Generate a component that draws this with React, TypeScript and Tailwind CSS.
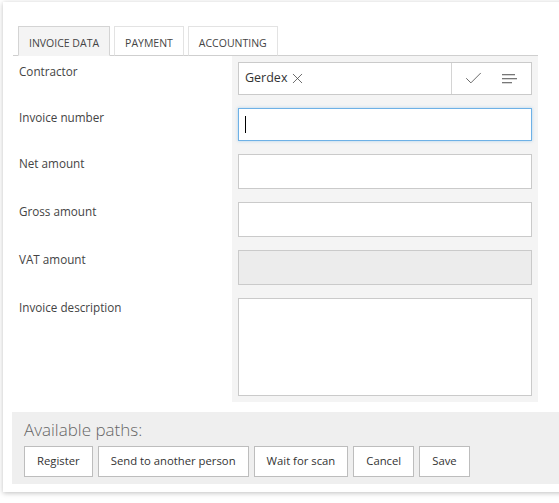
import { Check, X } from 'lucide-react'

const tabs = ['INVOICE DATA', 'PAYMENT', 'ACCOUNTING']
const paths = ['Register', 'Send to another person', 'Wait for scan', 'Cancel', 'Save']

const labels = [
  { name: 'Contractor', h: 'h-[46px]' },
  { name: 'Invoice number', h: 'h-[46px]' },
  { name: 'Net amount', h: 'h-[48px]' },
  { name: 'Gross amount', h: 'h-[48px]' },
  { name: 'VAT amount', h: 'h-[48px]' },
  { name: 'Invoice description', h: 'h-[98px]' },
]

export default function App() {
  return (
    <div className="relative h-[503px] w-[559px] overflow-hidden bg-white font-['Open_Sans',sans-serif] text-[#444]">
      <div className="ml-[3px] mt-[2px] w-[570px] bg-white pb-[8px] pt-[24px] shadow-[0_1px_5px_rgba(0,0,0,0.25)]">
        <div className="ml-[10px] flex w-[525px] gap-[4px] border-b border-[#cfcfcf] pl-[5px]">
          {tabs.map((t, i) => (
            <div
              key={t}
              className={`-mb-px flex h-[30px] items-center border px-[10px] pt-[5px] text-[10.5px] ${
                i === 0 ? 'border-[#d4d4d4] border-b-[#f4f4f4] bg-[#f4f4f4]' : 'border-[#e3e3e3] border-b-[#cfcfcf] bg-white'
              }`}
            >
              {t}
            </div>
          ))}
        </div>

        <div className="flex">
          <div className="w-[229px] pl-[16px] pt-[6px] text-[11.7px]">
            {labels.map((l) => (
              <div key={l.name} className={`${l.h} leading-[18px]`}>
                {l.name}
              </div>
            ))}
          </div>
          <div className="w-[306px] bg-[#f4f4f4] p-[6px]">
            <div className="mb-[13px] flex h-[33px] border border-[#cacaca] bg-white">
              <div className="flex flex-1 items-center gap-[2px] pl-[6px] text-[12.5px] text-[#333]">
                Gerdex
                <X size={17} strokeWidth={1.1} className="text-[#444]" />
              </div>
              <div className="flex w-[80px] items-center border-l border-[#d4d4d4] pl-[11px]">
                <Check size={21} strokeWidth={1} className="text-[#555]" />
                <svg className="ml-[18px]" width="15" height="10" viewBox="0 0 15 10">
                  <rect x="0" y="0" width="13" height="1.3" fill="#777" />
                  <rect x="0" y="4" width="15" height="1.3" fill="#777" />
                  <rect x="0" y="8" width="10" height="1.3" fill="#777" />
                </svg>
              </div>
            </div>
            <div className="mb-[13px] flex h-[33px] items-center border border-[#6eb1e6] bg-white pl-[6px] shadow-[0_0_3px_rgba(110,177,230,0.5)]">
              <div className="h-[17px] w-px bg-black" />
            </div>
            <div className="mb-[13px] h-[35px] border border-[#cacaca] bg-white" />
            <div className="mb-[13px] h-[35px] border border-[#cacaca] bg-white" />
            <div className="mb-[13px] h-[35px] border border-[#cacaca] bg-[#ececec]" />
            <div className="h-[98px] border border-[#cacaca] bg-white" />
          </div>
        </div>

        <div className="ml-[9px] mt-[10px] bg-[#efefef] pb-[7px] pl-[12px] pr-[10px] pt-[6px]">
          <div className="text-[17px] font-light leading-[24px] text-[#666]">Available paths:</div>
          <div className="mt-[4px] flex gap-[5px]">
            {paths.map((p) => (
              <button
                key={p}
                className="h-[31px] border border-[#bdbdbd] bg-white px-[12px] text-[11.3px] text-[#333]"
              >
                {p}
              </button>
            ))}
          </div>
        </div>
      </div>
    </div>
  )
}
